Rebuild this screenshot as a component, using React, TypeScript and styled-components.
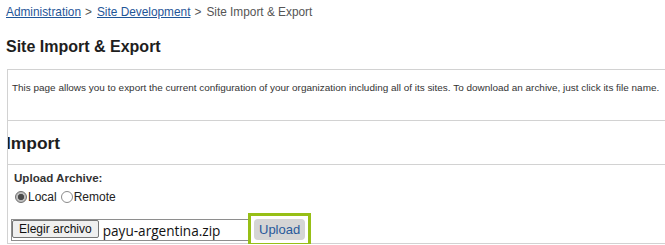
import React from "react";
import styled, { createGlobalStyle } from "styled-components";

const GlobalStyle = createGlobalStyle`
  html, body { margin: 0; padding: 0; background: #fff; overflow: hidden; }
  body { font-family: "Liberation Sans", Arial, sans-serif; color: #222; }
`;

const Page = styled.div`
  padding: 4px 0 0 6px;
`;

const Breadcrumb = styled.nav`
  display: flex;
  align-items: center;
  height: 16px;
  font-size: 11.85px;
  line-height: 16px;
  color: #555;
  white-space: nowrap;
`;

const Crumb = styled.a`
  color: #1f5698;
  text-decoration: underline;
  text-underline-offset: 1px;
`;

const Sep = styled.span`
  margin: 0 5px 0 4px;
  color: #555;
`;

const Title = styled.h1`
  margin: 17px 0 12px;
  font-size: 16px;
  line-height: 20px;
  font-weight: bold;
  color: #1e1e1e;
`;

const Panel = styled.div`
  margin-left: 1px;
  border-left: 1px solid #d2d2d2;
  border-top: 1px solid #d2d2d2;
  overflow: hidden;
`;

const DescRow = styled.div`
  box-sizing: border-box;
  height: 51px;
  padding: 12px 0 0 4px;
  border-bottom: 1px solid #d2d2d2;
  font-size: 9.95px;
  line-height: 12px;
  color: #333;
  white-space: nowrap;
`;

const SectionRow = styled.div`
  box-sizing: border-box;
  height: 44px;
  padding-top: 12px;
  border-bottom: 1px solid #d2d2d2;
`;

const SectionHeading = styled.h2`
  margin: 0 0 0 -2px;
  font-size: 17.4px;
  line-height: 20px;
  font-weight: bold;
  color: #1e1e1e;
`;

const UploadBlock = styled.div`
  padding: 6px 0 2px 3px;
  border-bottom: 1px solid #d2d2d2;
`;

const FieldLabel = styled.div`
  padding-left: 3px;
  font-size: 11.6px;
  line-height: 14px;
  font-weight: bold;
  color: #333;
`;

const RadioGroup = styled.div`
  display: flex;
  align-items: center;
  margin-top: 4px;
  padding-left: 3px;
  height: 16px;
  font-size: 12px;
  color: #222;
`;

const RadioLabel = styled.label`
  display: flex;
  align-items: center;
  margin-right: 3px;
`;

const Radio = styled.input`
  appearance: none;
  box-sizing: border-box;
  width: 12px;
  height: 12px;
  margin: 0 1px 0 1px;
  border-radius: 50%;
  border: 1px solid #8b8b8b;
  background: #fff;
  &:checked {
    border-color: #6e6e6e;
    background: radial-gradient(circle, #4a4a4a 0 2.8px, #bdbdbd 3.4px);
  }
`;

const FileRow = styled.div`
  display: flex;
  align-items: center;
  margin-top: 13px;
  height: 23px;
`;

const FilePicker = styled.label`
  box-sizing: border-box;
  display: flex;
  align-items: center;
  width: 238px;
  height: 22px;
  padding: 0;
  border: 1px solid #8e8e8e;
  margin-top: 1px;
`;

const ChooseButton = styled.span`
  box-sizing: border-box;
  display: inline-flex;
  align-items: center;
  height: 18px;
  margin-top: -2px;
  padding: 0 6px;
  border: 1px solid #767676;
  border-radius: 2px;
  background: #efefef;
  font-size: 12px;
  color: #111;
`;

const FileName = styled.span`
  margin-left: 4px;
  font-family: "Open Sans", "DejaVu Sans", sans-serif;
  font-size: 13.6px;
  color: #111;
`;

const Highlight = styled.span`
  display: inline-flex;
  margin-left: 5px;
  outline: 3px solid #97bf16;
  outline-offset: 3px;
`;

const UploadButton = styled.button`
  box-sizing: border-box;
  height: 21px;
  padding: 0 5px;
  border: none;
  border-radius: 4px;
  background: #d5d5d5;
  color: #28599a;
  font-family: "Liberation Sans", Arial, sans-serif;
  font-size: 13px;
  outline: none;
`;

export default function App() {
  return (
    <>
      <GlobalStyle />
      <Page>
        <Breadcrumb>
          <Crumb href="#">Administration</Crumb>
          <Sep>&gt;</Sep>
          <Crumb href="#">Site Development</Crumb>
          <Sep>&gt;</Sep>
          <span>Site Import &amp; Export</span>
        </Breadcrumb>
        <Title>Site Import &amp; Export</Title>
        <Panel>
          <DescRow>
            This page allows you to export the current configuration of your organization including all of its sites. To download an archive, just click its file name.
          </DescRow>
          <SectionRow>
            <SectionHeading>Import</SectionHeading>
          </SectionRow>
          <UploadBlock>
            <FieldLabel>Upload Archive:</FieldLabel>
            <RadioGroup>
              <RadioLabel>
                <Radio type="radio" name="src" defaultChecked />
                Local
              </RadioLabel>
              <RadioLabel>
                <Radio type="radio" name="src" />
                Remote
              </RadioLabel>
            </RadioGroup>
            <FileRow>
              <FilePicker>
                <ChooseButton>Elegir archivo</ChooseButton>
                <FileName>payu-argentina.zip</FileName>
              </FilePicker>
              <Highlight>
                <UploadButton type="button">Upload</UploadButton>
              </Highlight>
            </FileRow>
          </UploadBlock>
        </Panel>
      </Page>
    </>
  );
}
